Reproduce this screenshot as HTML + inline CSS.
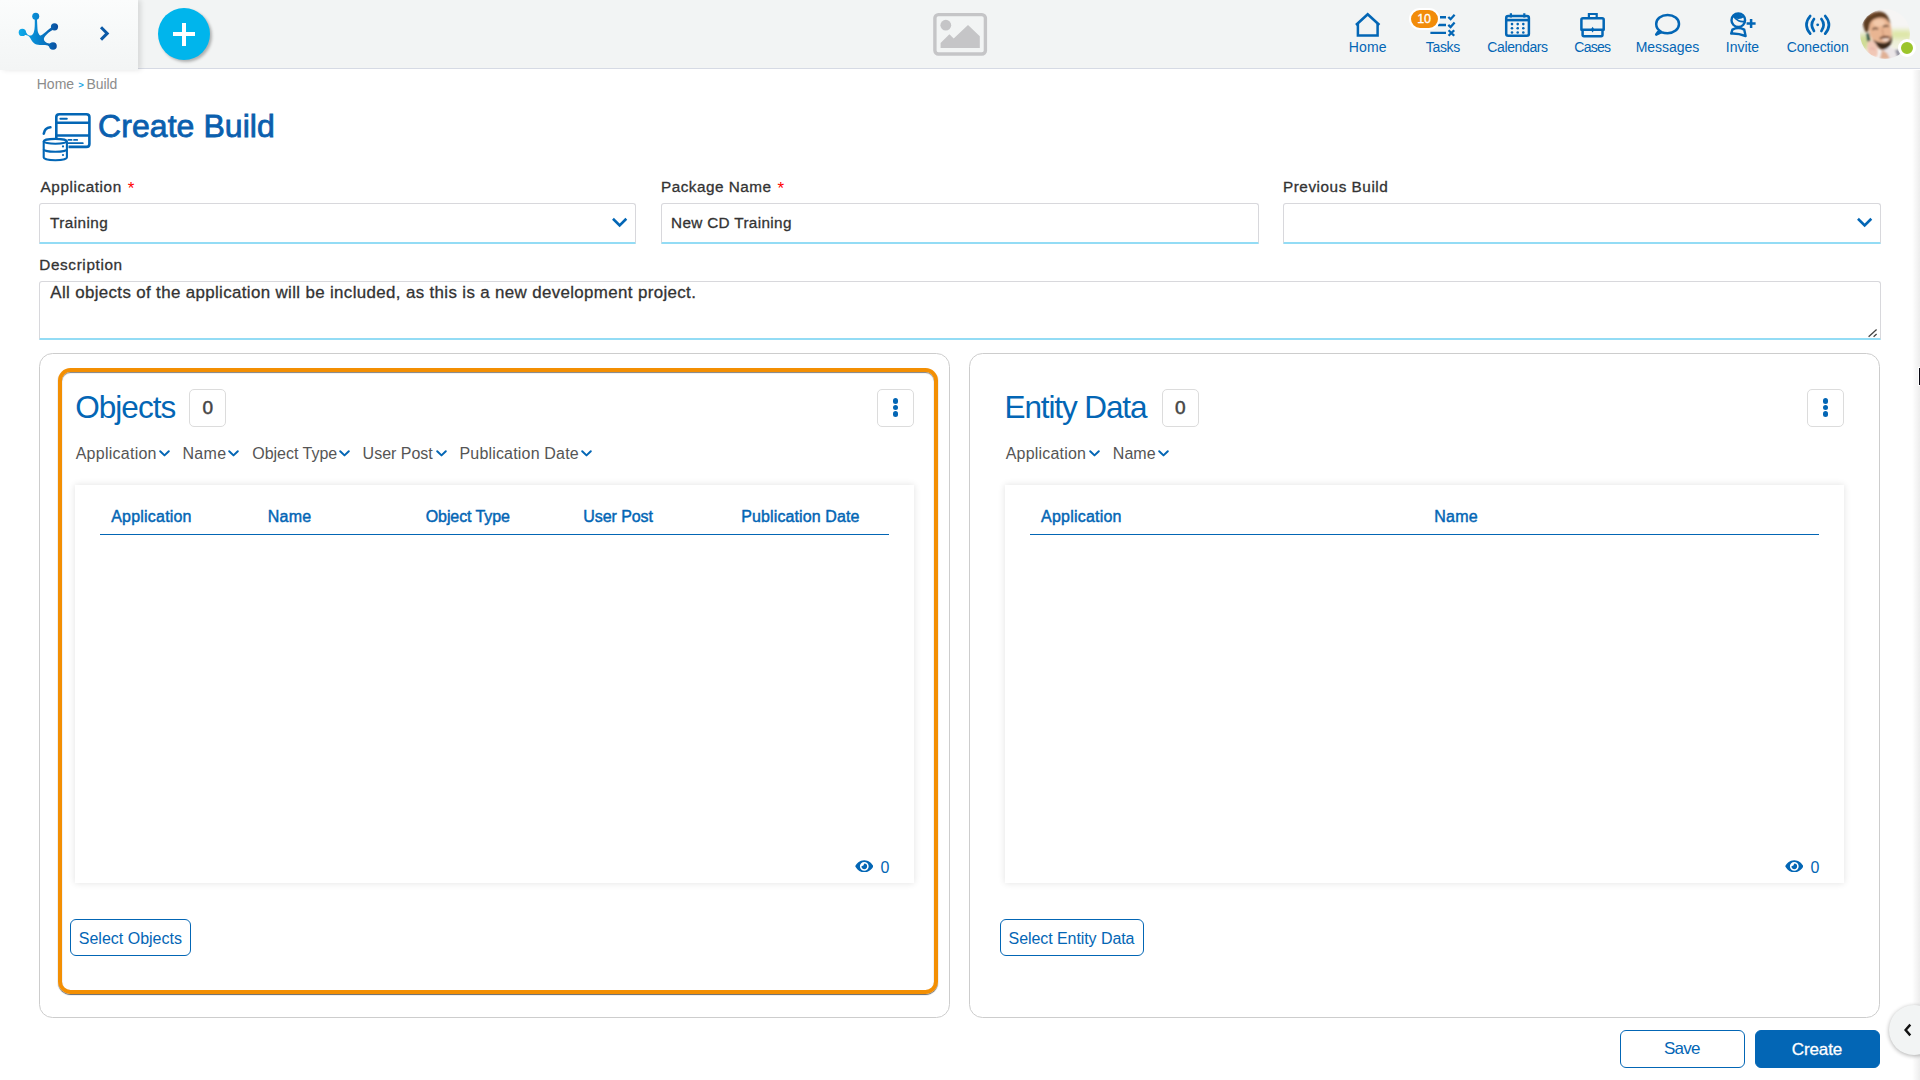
<!DOCTYPE html>
<html lang="en">
<head>
<meta charset="utf-8">
<title>Create Build</title>
<style>
*{box-sizing:border-box;margin:0;padding:0}
html,body{width:1920px;height:1080px;overflow:hidden;background:#fff}
body{font-family:"Liberation Sans",sans-serif;color:#333;position:relative}
.abs{position:absolute}
.blue{color:#0366b5}
/* header */
#hdr{position:absolute;left:0;top:0;width:1920px;height:69px;background:#f2f4f4;border-bottom:1px solid #d6dae4}
#logo{position:absolute;left:0;top:0;width:138px;height:69.5px;background:linear-gradient(180deg,#fbfcfc 0%,#f7f9f9 45%,#f3f5f5 100%);box-shadow:3px 0 5px rgba(0,0,0,.11)}
#plus{position:absolute;left:158px;top:8px;width:52px;height:52px;border-radius:50%;background:#00b5ec;box-shadow:2px 2px 3px rgba(0,0,0,.28)}
#plus:before{content:"";position:absolute;left:15px;top:24px;width:22px;height:4px;background:#fff}
#plus:after{content:"";position:absolute;left:24px;top:14.5px;width:4px;height:23px;background:#fff}
.nav{position:absolute;top:0;width:90px;height:68px;text-align:center;color:#0366b5;font-size:14px}
.nav span{position:absolute;left:0;right:0;top:39px;line-height:16px;white-space:nowrap}
.nav svg{position:absolute;top:10px;left:30px;width:30px;height:30px;overflow:visible}
#badge{position:absolute;left:1409px;top:8px;width:31px;height:22px;border-radius:11px;background:#f28c0a;border:2px solid #fff;color:#fff;font-size:12.5px;line-height:18px;text-align:center;letter-spacing:-0.2px;padding-right:1px;-webkit-text-stroke:0.3px #fff}
#avatar{position:absolute;left:1860px;top:9px;width:50px;height:50px;border-radius:50%;overflow:hidden}
#online{position:absolute;left:1898px;top:39px;width:18px;height:18px;border-radius:50%;background:#9cc52b;border:3px solid #fff}
/* breadcrumb + title */
.crumb{position:absolute;top:76px;font-size:14px;line-height:16px;color:#8c8c8c;white-space:nowrap}
#title{position:absolute;left:98px;top:106.5px;font-size:32px;line-height:38px;-webkit-text-stroke:0.8px #0a5fae;color:#0a5fae;white-space:nowrap}
/* form */
.lbl{position:absolute;font-size:15.3px;line-height:18px;-webkit-text-stroke:0.3px #333;color:#333;white-space:nowrap}
.lbl i{font-size:17px;color:#f00;font-style:normal;margin-left:6px;position:relative;top:1.5px;-webkit-text-stroke:0;letter-spacing:0}
.inp{position:absolute;height:41px;border:1px solid #d8d8dc;border-bottom:2px solid #93dcf5;border-radius:3px 3px 1px 1px;background:#fff;font-size:15.3px;-webkit-text-stroke:0.3px #333;color:#333;line-height:37px;padding-left:9px;white-space:nowrap}
.inp svg{position:absolute;right:7px;top:12px;width:16px;height:12px;overflow:visible}
/* panels */
.panel{position:absolute;top:353px;height:665px;border:1px solid #cdcdcd;border-radius:13.5px;background:#fff}
#hl{position:absolute;left:58px;top:368px;width:880px;height:626px;border:4px solid #f38f03;border-radius:12.5px;box-shadow:0 1px 1px rgba(0,0,0,.6),inset 0 1px 1px rgba(0,0,0,.5)}
.ptitle{position:absolute;top:388px;font-size:31.5px;line-height:38px;color:#0366b5;white-space:nowrap}
.cnt{position:absolute;top:389px;width:37px;height:38px;border:1px solid #dcdcdc;border-radius:5px;font-size:19px;-webkit-text-stroke:0.5px #444;color:#444;text-align:center;line-height:36px}
.dots{position:absolute;top:389px;width:37px;height:38px;border:1px solid #dcdcdc;border-radius:5px}
.dots b{position:absolute;left:14.7px;width:5.4px;height:5.4px;border-radius:50%;background:#0366b5}
.flt{position:absolute;top:444px;font-size:16px;line-height:20px;color:#555;white-space:nowrap}
.fchev{position:absolute;top:450px;width:11px;height:7px;overflow:visible}
.card{position:absolute;top:485px;height:398px;background:#fff;box-shadow:0 0 7px rgba(0,0,0,.12)}
.th{position:absolute;top:507px;font-size:16px;line-height:20px;-webkit-text-stroke:0.45px #0366b5;color:#0366b5;white-space:nowrap}
.hline{position:absolute;top:534px;height:1px;background:#0366b5}
.eye{position:absolute;top:859.7px;width:18.6px;height:12.7px}
.eye0{position:absolute;top:857.5px;font-size:16px;line-height:20px;color:#0366b5}
.btn{position:absolute;border:1px solid #0366b5;border-radius:6px;color:#0366b5;font-size:16px;text-align:center;white-space:nowrap;background:#fff}
#tab{z-index:2;position:absolute;left:1889px;top:1005px;width:50px;height:50px;border-radius:50%;background:#f2f4f4;box-shadow:0 1px 4px rgba(0,0,0,.32)}
#edge{position:absolute;left:1912px;top:70px;width:8px;height:1010px;background:linear-gradient(90deg,rgba(0,0,0,0),rgba(0,0,0,.07))}
#cur{position:absolute;left:1918px;top:367px;width:4px;height:19px;background:#0a0a14;border:1px solid #fff}
/*FIT*/
#t_home1{letter-spacing:0.118px;margin-left:-0.50px}
#t_tasks1{letter-spacing:-0.328px;margin-left:-0.25px}
#t_calendars1{letter-spacing:-0.383px;margin-left:-1.00px}
#t_cases1{letter-spacing:-0.714px;margin-left:-1.40px}
#t_messages1{letter-spacing:-0.048px;margin-left:-1.15px}
#t_invite1{letter-spacing:-0.030px;margin-left:-1.10px}
#t_conection1{letter-spacing:-0.117px;margin-left:-0.65px}
#t_chome{letter-spacing:0.000px;margin-left:-1.25px}
#t_cbuild{letter-spacing:-0.070px;margin-left:-0.50px}
#title{letter-spacing:0.068px;margin-left:0.00px}
#t_application1{letter-spacing:0.585px;margin-left:1.50px}
#t_training1{letter-spacing:0.436px;text-indent:1.00px}
#t_packagename1{letter-spacing:0.498px;margin-left:0.00px}
#t_newcdtrainin1{letter-spacing:0.341px;text-indent:0.00px}
#t_previousbuil1{letter-spacing:0.539px;margin-left:0.00px}
#t_description1{letter-spacing:0.635px;margin-left:0.25px}
#desc{letter-spacing:0.360px;text-indent:1.25px}
#t_objects1{letter-spacing:-0.973px;margin-left:0.25px}
#t_01{letter-spacing:0.000px;text-indent:0.50px}
#t_application2{letter-spacing:0.255px;margin-left:0.70px}
#t_name1{letter-spacing:0.372px;margin-left:-0.60px}
#t_objecttype1{letter-spacing:-0.015px;margin-left:0.25px}
#t_userpost1{letter-spacing:-0.015px;margin-left:-0.40px}
#t_publicationd1{letter-spacing:0.181px;margin-left:-0.55px}
#t_application3{letter-spacing:0.200px;margin-left:1.25px}
#t_name2{letter-spacing:0.250px;margin-left:-0.25px}
#t_objecttype2{letter-spacing:-0.100px;margin-left:0.75px}
#t_userpost2{letter-spacing:-0.063px;margin-left:0.25px}
#t_publicationd2{letter-spacing:0.113px;margin-left:0.25px}
#t_02{letter-spacing:0.000px;margin-left:0.40px}
#t_selectobject1{letter-spacing:0.003px;text-indent:-0.25px}
#t_entitydata1{letter-spacing:-1.110px;margin-left:-0.50px}
#t_03{letter-spacing:0.000px;text-indent:-0.50px}
#t_application4{letter-spacing:0.205px;margin-left:0.70px}
#t_name3{letter-spacing:0.084px;margin-left:-0.25px}
#t_application5{letter-spacing:0.205px;margin-left:1.10px}
#t_name4{letter-spacing:0.250px;margin-left:0.25px}
#t_04{letter-spacing:0.000px;margin-left:0.40px}
#t_selectentity1{letter-spacing:-0.070px;text-indent:-1.00px}
#t_save1{letter-spacing:-0.769px;text-indent:-1.25px}
#t_create1{letter-spacing:-0.090px;text-indent:-1.00px}
/*ENDFIT*/
</style>
</head>
<body>
<div id="hdr"></div>
<div id="logo"></div>
<div id="plus"></div>
<svg class="abs" style="left:0;top:0" width="1920" height="70" viewBox="0 0 1920 70" fill="none" stroke="#0366b5" stroke-width="2.5">
<defs><linearGradient id="lg" gradientUnits="userSpaceOnUse" x1="19" y1="0" x2="58" y2="0"><stop offset="0" stop-color="#0eaaea"/><stop offset="0.45" stop-color="#0886d0"/><stop offset="0.7" stop-color="#0870bd"/><stop offset="1" stop-color="#0a4c9c"/></linearGradient></defs>
<!-- logo -->
<g stroke="none" fill="url(#lg)">
<circle cx="35.7" cy="16.3" r="3.5"/><circle cx="54.5" cy="26.8" r="3.6"/><circle cx="22.3" cy="32.4" r="3.6"/><circle cx="53" cy="46" r="3.8"/>
<path d="M34.7 17.5 C34.9 24 34.8 27 34.5 29.1 C34 32 33.5 34 32 35 C30.5 36 28.5 35.5 27.3 34.2 C26.5 33.2 26 32 25.2 30.6 L23.5 35 C26 34.8 27 35.2 27.7 35.6 C29 36.4 29.8 37.4 30.5 38.4 C31.5 40 32.3 41.8 33.8 43 C35.5 44.4 37.5 44.9 39.8 44.9 L45 44.9 C47 44.9 48.5 45.5 50.4 47.6 L51.6 43.5 C49 43.6 47.5 43.2 46.2 42.4 C44.8 41.6 44 40.6 43.9 39.3 C43.9 38 44.5 37 45.3 36.1 C47 33.8 49.5 31.8 53 29.8 L51.6 27.2 C48.5 29.5 46.5 31.2 44.4 32.9 C43 34 42 35 40.7 35.4 C40 35.6 39.6 35.2 39.3 34.7 C38 33 37.6 31 37.5 29.1 C37.3 26 37.2 23 36.9 17.5 Z"/>
</g>
<!-- chevron -->
<path d="M101 27.2 L107.2 33.4 L101 39.6" stroke="#0b5aa8" stroke-width="3"/>
<!-- placeholder image -->
<rect x="934.9" y="14.6" width="50.5" height="39.4" rx="3.5" stroke="#c5c5c7" stroke-width="3.4"/>
<circle cx="945.8" cy="25.2" r="5.4" fill="#c5c5c7" stroke="none"/>
<path d="M940.6 43.1 L949.4 34.3 L953.7 38.5 L968 24.9 L979.8 36.2 L979.8 48 L940.6 48 Z" fill="#c5c5c7" stroke="none"/>
<!-- home -->
<path d="M1356 25 L1367.7 14.3 L1379.4 25" stroke-width="2.6" stroke-linejoin="miter"/>
<path d="M1357.9 24 L1357.9 35.6 L1377.6 35.6 L1377.6 24" stroke-width="2.5"/>
<!-- tasks -->
<path d="M1440 17.2 H1446 M1438 25 H1446 M1430.4 32.9 H1446" stroke-width="2.4"/>
<path d="M1448.3 17 L1450.6 19.2 L1454.6 14.8 M1448.3 24.8 L1450.6 27 L1454.6 22.6 M1448.6 30.2 L1454.2 35.8 M1454.2 30.2 L1448.6 35.8" stroke-width="2.3"/>
<!-- calendar -->
<rect x="1506.2" y="16" width="22.7" height="19.8" rx="2" stroke-width="2.5"/>
<path d="M1506 20.1 H1529" stroke-width="2.6"/>
<path d="M1510.9 13.2 V17.5 M1524.3 13.2 V17.5" stroke-width="2.2"/>
<g fill="#0366b5" stroke="none"><circle cx="1512" cy="24.1" r="1.3"/><circle cx="1517.7" cy="24.1" r="1.3"/><circle cx="1523.3" cy="24.1" r="1.3"/><circle cx="1512" cy="28.3" r="1.3"/><circle cx="1517.7" cy="28.3" r="1.3"/><circle cx="1523.3" cy="28.3" r="1.3"/><circle cx="1512" cy="32.5" r="1.3"/><circle cx="1517.7" cy="32.5" r="1.3"/><circle cx="1523.3" cy="32.5" r="1.3"/></g>
<!-- briefcase -->
<path d="M1583 18.2 H1602.1 Q1603.7 18.2 1603.7 19.8 V29.7 H1581.4 V19.8 Q1581.4 18.2 1583 18.2 Z" stroke-width="2.5" stroke-linejoin="round"/>
<path d="M1582.6 29.7 V34.8 Q1582.6 36.2 1584 36.2 H1601.1 Q1602.5 36.2 1602.5 34.8 V29.7" stroke-width="2.5" stroke-linejoin="round"/>
<path d="M1588.9 18 V14 H1596.7 V18" stroke-width="2.2"/>
<path d="M1592.6 26.8 L1594.4 29.7 L1592.6 32.6 L1590.8 29.7 Z" fill="#0366b5" stroke="none"/>
<!-- messages -->
<path d="M1661.5 32.2 C1657.8 30.2 1656.2 27.2 1656.2 24.1 C1656.2 18.9 1661.3 15 1667.6 15 C1673.9 15 1679 18.9 1679 24.1 C1679 29.3 1673.9 33.2 1667.6 33.2 C1665.5 33.2 1663.5 32.9 1661.5 32.2 L1656.2 34.6 L1659.3 30.3" stroke-width="2.5" stroke-linejoin="round"/>
<!-- invite -->
<circle cx="1738.3" cy="20.2" r="6.8" stroke-width="2.4"/>
<path d="M1732 16.6 C1733.5 13.6 1736.5 13.2 1738.5 13.4 L1744 17 C1741 19.8 1735.5 19.6 1732 16.6 Z" fill="#0366b5" stroke="none"/>
<path d="M1733.4 15.5 C1735.5 20.5 1741 22.5 1745.8 21.2" stroke-width="1.8"/>
<path d="M1731.2 33.6 L1732.4 29.6 Q1738.3 26.4 1744.2 29.6 L1745.6 36 Q1738 33.2 1731.2 33.6 Z" stroke-width="2.4" stroke-linejoin="round"/>
<path d="M1746.6 23.4 H1755.6 M1751.1 18.9 V27.9" stroke-width="2.5"/>
<!-- conection -->
<path d="M1814 19 Q1809.6 24.8 1814 31 M1810.2 16 Q1802.8 24.8 1810.2 33.6 M1821.4 19 Q1825.8 24.8 1821.4 31 M1825.2 16 Q1832.6 24.8 1825.2 33.6" stroke-width="2.7" stroke-linecap="round"/>
<circle cx="1817.7" cy="24.8" r="1.4" fill="#0366b5" stroke="none"/>
</svg>
<div class="nav" style="left:1323px"><span id="t_home1">Home</span></div>
<div class="nav" style="left:1398px"><span id="t_tasks1">Tasks</span></div>
<div class="nav" style="left:1473px"><span id="t_calendars1">Calendars</span></div>
<div class="nav" style="left:1548px"><span id="t_cases1">Cases</span></div>
<div class="nav" style="left:1623px"><span id="t_messages1">Messages</span></div>
<div class="nav" style="left:1698px"><span id="t_invite1">Invite</span></div>
<div class="nav" style="left:1773px"><span id="t_conection1">Conection</span></div>
<div id="badge">10</div>
<div id="avatar"><svg width="50" height="50" viewBox="0 0 50 50">
<defs><filter id="bl" x="-20%" y="-20%" width="140%" height="140%"><feGaussianBlur stdDeviation="0.9"/></filter>
<filter id="bl2" x="-20%" y="-20%" width="140%" height="140%"><feGaussianBlur stdDeviation="2.5"/></filter></defs>
<rect width="50" height="50" fill="#f6f5f4"/>
<g filter="url(#bl2)">
<rect x="30" y="21" width="22" height="9" fill="#dde6a6"/>
<rect x="30" y="30" width="22" height="10" fill="#eef0da"/>
<ellipse cx="4" cy="33" rx="7" ry="9" fill="#cfdc95"/>
<ellipse cx="6" cy="22" rx="4" ry="4" fill="#f0efe6"/>
</g>
<g filter="url(#bl)">
<path d="M19 50 L21 42 L30 38 L37 41 L41 50 Z" fill="#ebe6e8"/>
<path d="M35 41 L39 40.5 L41 48 L38 50 Z" fill="#8e8e9c"/>
<path d="M20 50 L22 41 L27 44 L30 50 Z" fill="#e0b094"/>
<path d="M9 16 C10 9 18 6 25 8 C30 10 31 16 31.5 22 C32 28 32 33 29 37 C26 41 21 42 18 39 C14 35 10 28 9 22 Z" fill="#e9b592"/>
<ellipse cx="19" cy="14" rx="6" ry="3.5" fill="#f3c9aa"/>
<path d="M3 14 C5 7 12 2 20 2.5 C26 3 29 8 30.5 15 C27 10 24 8 20 8.5 C15 9 11 11 9.5 16 C9 19 9 21 8 23 L5.5 23 C4 20 3 17 3 14 Z" fill="#5e3c22"/>
<path d="M9 6 C12 3.5 17 2.5 21 3 C17 4 13 5.5 10 8 Z" fill="#7a4e2c"/>
<path d="M13 31 C16 36 19 40 22 40.5 C26 41 30 38 31.5 33 C32.3 30 32 27.5 31.8 26 C31 30 29 32.5 26 33.5 C22 34.5 17 33 13 31 Z" fill="#3d2a1e"/>
<path d="M19.5 29 C22 27.2 26 26.6 29.5 27.6 C29.8 28.4 29.6 29 29.4 29.4 C26 28.6 23 29 20 30.4 Z" fill="#5b3525"/>
<path d="M21.5 30.6 C24 29.6 27 29.4 29 29.9 C28.4 31.6 24.5 32.6 21.5 30.6 Z" fill="#f4e6e0"/>
<path d="M12.5 20.6 C14 19.3 16.5 19.2 18 20 M23 18 C24.5 16.8 27 16.6 28.6 17.4" stroke="#4a2f20" stroke-width="1.5" fill="none"/>
<path d="M22 20 C23 23 23.6 25 22.6 26.8 L25.5 26.6" stroke="#c98f70" stroke-width="1" fill="none"/>
<path d="M6.3 24.6 L9 24 L10.5 32 L7.6 33 Z" fill="#2c4d40"/>
<path d="M8 33 C10 31 14 31.5 16 35 C18 39 18.5 44 17 48 L9 47 C7 42 6.5 37 8 33 Z" fill="#f1c7b6"/>
<path d="M10 40 C12 39 14 39.5 15 41" stroke="#d99" stroke-width="0.8" fill="none"/>
</g></svg></div>
<div id="online"></div>
<svg class="abs" style="left:34px;top:104px" width="70" height="62" viewBox="34 104 70 62" fill="none" stroke="#0366b5" stroke-width="2.6">
<path d="M56.3 139 V117 Q56.3 114.2 59.3 114.2 H86.4 Q89.4 114.2 89.4 117 V144 Q89.4 146.9 86.4 146.9 H68.5"/>
<path d="M56.3 122.7 H89.4 M56.3 135.5 H89.4" stroke-width="2.4"/>
<path d="M60.4 118.8 H66.8" stroke-width="2" stroke-linecap="round"/>
<path d="M68.4 139.9 H71.6 M74 139.9 H77.2 M68.4 143.2 H82.8" stroke-width="1.8" stroke-linecap="round"/>
<path d="M43.8 133.6 Q44.6 128 50.4 127.3" stroke-width="2.6" stroke-linecap="round"/>
<g stroke-width="2.1"><ellipse cx="55.3" cy="141.3" rx="11.6" ry="2.4"/>
<path d="M43.7 141.3 V157.6 A11.6 2.6 0 0 0 66.9 157.6 V141.3"/>
<path d="M43.7 149.2 A11.6 2.6 0 0 0 66.9 149.2"/></g>
<circle cx="63" cy="146.4" r="1.1" fill="#0366b5" stroke="none"/><circle cx="63" cy="155" r="1.1" fill="#0366b5" stroke="none"/>
</svg>

<div class="crumb" id="t_chome" style="left:38px">Home</div><div class="crumb" id="t_cgt" style="left:78.2px;top:77.2px;color:#17a6e3;font-size:9.5px;font-weight:bold">&gt;</div><div class="crumb" id="t_cbuild" style="left:87px">Build</div>
<div id="title">Create Build</div>

<div class="lbl" style="left:39px;top:178px" id="t_application1">Application<i>*</i></div>
<div class="inp" style="left:39px;top:203px;width:597px" id="t_training1">Training<svg viewBox="0 0 16 12"><path d="M1.9 3.7 L7.65 9.45 L13.4 3.7" fill="none" stroke="#0366b5" stroke-width="2.6" stroke-linecap="square" stroke-linejoin="miter"/></svg></div>
<div class="lbl" style="left:661px;top:178px" id="t_packagename1">Package Name<i>*</i></div>
<div class="inp" style="left:661px;top:203px;width:598px" id="t_newcdtrainin1">New CD Training</div>
<div class="lbl" style="left:1283px;top:178px" id="t_previousbuil1">Previous Build</div>
<div class="inp" style="left:1283px;top:203px;width:598px"><svg viewBox="0 0 16 12"><path d="M1.9 3.7 L7.65 9.45 L13.4 3.7" fill="none" stroke="#0366b5" stroke-width="2.6" stroke-linecap="square" stroke-linejoin="miter"/></svg></div>
<div class="lbl" style="left:39px;top:256px" id="t_description1">Description</div>
<div class="inp" id="desc" style="left:39px;top:281px;width:1842px;height:59px;line-height:22px;font-size:16.9px">All objects of the application will be included, as this is a new development project.<svg style="right:2px;top:46px;width:10px;height:10px" viewBox="0 0 10 10"><path d="M0.6 8.8 L8.6 1.4 M5.6 8.8 L8.6 6" stroke="#444" stroke-width="1.3" fill="none"/></svg></div>
<!--FORM-->

<div class="panel" style="left:39px;width:911px"></div>
<div class="panel" style="left:969px;width:911px"></div>
<div id="hl"></div>
<div class="ptitle" style="left:75px" id="t_objects1">Objects</div>
<div class="cnt" style="left:189px" id="t_01">0</div>
<div class="dots" style="left:877px"><b style="top:8.3px"></b><b style="top:14.8px"></b><b style="top:21.3px"></b></div>
<div class="flt" style="left:75px" id="t_application2">Application</div>
<div class="flt" style="left:183px" id="t_name1">Name</div>
<div class="flt" style="left:252px" id="t_objecttype1">Object Type</div>
<div class="flt" style="left:363px" id="t_userpost1">User Post</div>
<div class="flt" style="left:460px" id="t_publicationd1">Publication Date</div>
<svg class="fchev" style="left:159.1px" viewBox="0 0 11 7"><path d="M1.2 1.2 L5.5 5.4 L9.8 1.2" fill="none" stroke="#0366b5" stroke-width="2" stroke-linecap="round" stroke-linejoin="round"/></svg><svg class="fchev" style="left:228.2px" viewBox="0 0 11 7"><path d="M1.2 1.2 L5.5 5.4 L9.8 1.2" fill="none" stroke="#0366b5" stroke-width="2" stroke-linecap="round" stroke-linejoin="round"/></svg><svg class="fchev" style="left:339.2px" viewBox="0 0 11 7"><path d="M1.2 1.2 L5.5 5.4 L9.8 1.2" fill="none" stroke="#0366b5" stroke-width="2" stroke-linecap="round" stroke-linejoin="round"/></svg><svg class="fchev" style="left:435.8px" viewBox="0 0 11 7"><path d="M1.2 1.2 L5.5 5.4 L9.8 1.2" fill="none" stroke="#0366b5" stroke-width="2" stroke-linecap="round" stroke-linejoin="round"/></svg><svg class="fchev" style="left:581.1px" viewBox="0 0 11 7"><path d="M1.2 1.2 L5.5 5.4 L9.8 1.2" fill="none" stroke="#0366b5" stroke-width="2" stroke-linecap="round" stroke-linejoin="round"/></svg><svg class="fchev" style="left:1089.2px" viewBox="0 0 11 7"><path d="M1.2 1.2 L5.5 5.4 L9.8 1.2" fill="none" stroke="#0366b5" stroke-width="2" stroke-linecap="round" stroke-linejoin="round"/></svg><svg class="fchev" style="left:1158.2px" viewBox="0 0 11 7"><path d="M1.2 1.2 L5.5 5.4 L9.8 1.2" fill="none" stroke="#0366b5" stroke-width="2" stroke-linecap="round" stroke-linejoin="round"/></svg>
<div class="card" style="left:75px;width:839px"></div>
<div class="th" style="left:110px" id="t_application3">Application</div>
<div class="th" style="left:268px" id="t_name2">Name</div>
<div class="th" style="left:425px" id="t_objecttype2">Object Type</div>
<div class="th" style="left:583px" id="t_userpost2">User Post</div>
<div class="th" style="left:741px" id="t_publicationd2">Publication Date</div>
<div class="hline" style="left:100px;width:789px"></div>
<svg class="eye" style="left:854.9px" viewBox="0 0 19 13"><path d="M9.5 0.3 C4.7 0.3 1.4 3.9 0.2 6.5 C1.4 9.1 4.7 12.7 9.5 12.7 C14.3 12.7 17.6 9.1 18.8 6.5 C17.6 3.9 14.3 0.3 9.5 0.3 Z M9.5 11 A4.5 4.5 0 1 1 9.5 2 A4.5 4.5 0 1 1 9.5 11 Z M9.5 3.6 A2.9 2.9 0 1 1 6.6 6.5 A3.5 3.5 0 0 0 9.5 3.6 Z" fill="#0366b5" fill-rule="evenodd"/></svg>
<div class="eye0" style="left:880px" id="t_02">0</div>
<div class="btn" style="left:70px;top:919px;width:121px;height:37px;line-height:37px" id="t_selectobject1">Select Objects</div>

<div class="ptitle" style="left:1005px" id="t_entitydata1">Entity Data</div>
<div class="cnt" style="left:1162px" id="t_03">0</div>
<div class="dots" style="left:1807px"><b style="top:8.3px"></b><b style="top:14.8px"></b><b style="top:21.3px"></b></div>
<div class="flt" style="left:1005px" id="t_application4">Application</div>
<div class="flt" style="left:1113px" id="t_name3">Name</div>
<div class="card" style="left:1005px;width:839px"></div>
<div class="th" style="left:1040px" id="t_application5">Application</div>
<div class="th" style="left:1434px" id="t_name4">Name</div>
<div class="hline" style="left:1030px;width:789px"></div>
<svg class="eye" style="left:1784.9px" viewBox="0 0 19 13"><path d="M9.5 0.3 C4.7 0.3 1.4 3.9 0.2 6.5 C1.4 9.1 4.7 12.7 9.5 12.7 C14.3 12.7 17.6 9.1 18.8 6.5 C17.6 3.9 14.3 0.3 9.5 0.3 Z M9.5 11 A4.5 4.5 0 1 1 9.5 2 A4.5 4.5 0 1 1 9.5 11 Z M9.5 3.6 A2.9 2.9 0 1 1 6.6 6.5 A3.5 3.5 0 0 0 9.5 3.6 Z" fill="#0366b5" fill-rule="evenodd"/></svg>
<div class="eye0" style="left:1810px" id="t_04">0</div>
<div class="btn" style="left:1000px;top:919px;width:144px;height:37px;line-height:37px" id="t_selectentity1">Select Entity Data</div>

<div class="btn" style="left:1620px;top:1030px;width:125px;height:38px;line-height:36px;font-size:17px" id="t_save1">Save</div>
<div class="btn" style="left:1755px;top:1030px;width:125px;height:38px;line-height:38px;font-size:17px;background:#0366b5;color:#fff;-webkit-text-stroke:0.3px #fff" id="t_create1">Create</div>
<div id="tab"><svg style="position:absolute;left:0;top:0" width="50" height="50" viewBox="0 0 50 50"><path d="M21.3 19.6 L16.6 25 L21.3 30.4" fill="none" stroke="#111" stroke-width="2.4" stroke-linejoin="miter"/></svg></div>
<div id="edge"></div>
<div id="cur"></div>
<!--PANELS-->
</body>
</html>
